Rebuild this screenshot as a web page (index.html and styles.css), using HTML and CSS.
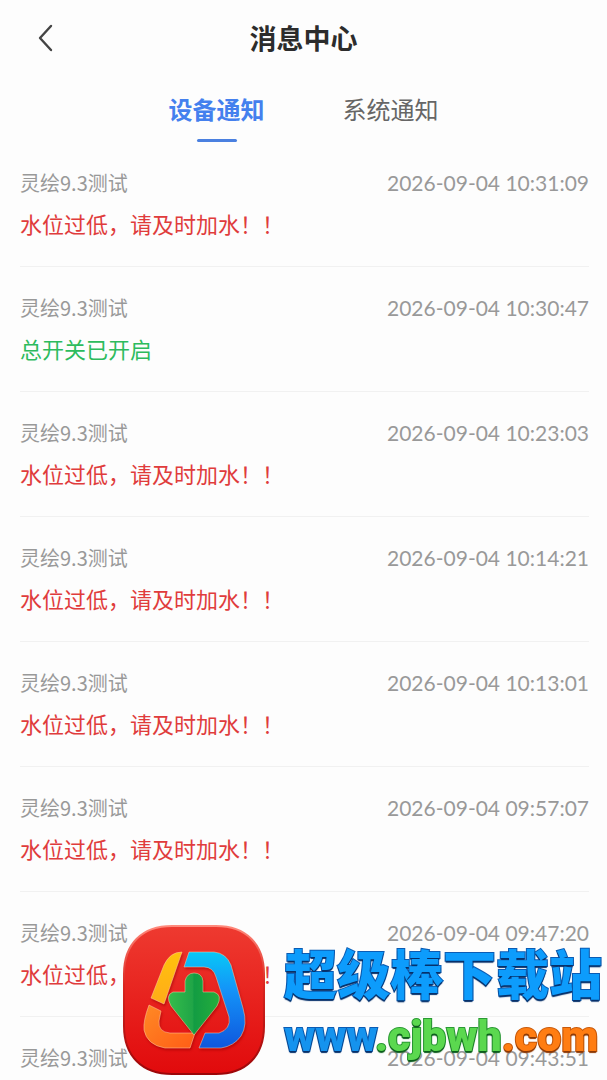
FILE: index.html
```html
<!doctype html>
<html lang="zh-CN">
<head>
<meta charset="utf-8">
<meta name="viewport" content="width=device-width, initial-scale=1">
<title>消息中心</title>
<link rel="stylesheet" href="styles.css">
</head>
<body>

<header class="topbar">
  <button class="back" type="button" aria-label="返回">
    <svg width="16" height="28" viewBox="0 0 16 28"><path d="M14 2 L3 14 L14 26"/></svg>
  </button>
  <h1>消息中心</h1>
</header>

<nav class="tabs">
  <button class="tab active" type="button">设备通知</button>
  <button class="tab" type="button">系统通知</button>
</nav>

<ul class="messages">
  <li>
    <div class="meta"><span>灵绘9.3测试</span><time>2026-09-04 10:31:09</time></div>
    <p class="warn">水位过低，请及时加水！！</p>
  </li>
  <li>
    <div class="meta"><span>灵绘9.3测试</span><time>2026-09-04 10:30:47</time></div>
    <p class="ok">总开关已开启</p>
  </li>
  <li>
    <div class="meta"><span>灵绘9.3测试</span><time>2026-09-04 10:23:03</time></div>
    <p class="warn">水位过低，请及时加水！！</p>
  </li>
  <li>
    <div class="meta"><span>灵绘9.3测试</span><time>2026-09-04 10:14:21</time></div>
    <p class="warn">水位过低，请及时加水！！</p>
  </li>
  <li>
    <div class="meta"><span>灵绘9.3测试</span><time>2026-09-04 10:13:01</time></div>
    <p class="warn">水位过低，请及时加水！！</p>
  </li>
  <li>
    <div class="meta"><span>灵绘9.3测试</span><time>2026-09-04 09:57:07</time></div>
    <p class="warn">水位过低，请及时加水！！</p>
  </li>
  <li>
    <div class="meta"><span>灵绘9.3测试</span><time>2026-09-04 09:47:20</time></div>
    <p class="warn">水位过低，请及时加水！！</p>
  </li>
  <li>
    <div class="meta"><span>灵绘9.3测试</span><time>2026-09-04 09:43:51</time></div>
  </li>
</ul>

<!-- site badge, floats over the list -->
<aside class="badge">
  <svg class="badge-logo" width="144" height="152" viewBox="0 0 144 152">
    <defs>
      <linearGradient id="red" x1="0" y1="0" x2="0" y2="1"><stop offset="0" stop-color="#ee3a30"/><stop offset="1" stop-color="#e10a0c"/></linearGradient>
      <linearGradient id="edge" x1="0" y1="0" x2="0" y2="1"><stop offset="0" stop-color="#ff8a7c"/><stop offset=".4" stop-color="#d92620"/><stop offset="1" stop-color="#9c0608"/></linearGradient>
      <linearGradient id="blue" x1="0" y1="0" x2="0" y2="1"><stop offset="0" stop-color="#08c8f6"/><stop offset=".4" stop-color="#1493f8"/><stop offset="1" stop-color="#0f57dd"/></linearGradient>
      <linearGradient id="yellow" x1="0" y1="0" x2="0" y2="1"><stop offset="0" stop-color="#ffc20c"/><stop offset="1" stop-color="#ffab19"/></linearGradient>
      <linearGradient id="orange" x1="0" y1="0" x2="1" y2="1"><stop offset="0" stop-color="#ff8a25"/><stop offset="1" stop-color="#ff5d16"/></linearGradient>
      <linearGradient id="green" x1="0" y1="0" x2="1" y2="0"><stop offset="0" stop-color="#35bd4b"/><stop offset=".48" stop-color="#20a547"/><stop offset=".5" stop-color="#129c43"/><stop offset="1" stop-color="#25ad3c"/></linearGradient>
    </defs>
    <path d="M50 2 H94 C124 2 142 20 142 50 V102 C142 132 124 150 94 150 H50 C20 150 2 132 2 102 V50 C2 20 20 2 50 2 Z" fill="url(#red)" stroke="url(#edge)" stroke-width="2"/>
    <g class="badge-parts">
      <path d="M60 28 L42 80 L29 74 L42 41 Q48 28 60 28 Z" fill="url(#yellow)"/>
      <path d="M27 81 L39 87 L37 97 Q36 108 48 109 H73 L68 124 H43 Q25 121 22 106 Q21 97 27 81 Z" fill="url(#orange)"/>
      <path d="M67 28 H92 Q104 29 109 41 L121 84 Q126 101 119 112 Q112 122 99 124 H77 L83 109 H97 Q109 105 107 93 L94 53 Q91 43 82 43 H62 Z" fill="url(#blue)"/>
      <path d="M72 111 L49 82 Q43 71 51 68 H63 V57 Q65 49 72 49 Q80 49 81 57 V68 H92 Q101 71 95 82 Z" fill="url(#green)"/>
    </g>
  </svg>
  <div class="badge-text">
    <strong>超级棒下载站</strong>
    <span class="url"><span class="www">www</span><span class="domain">.cjbwh</span><span class="com">.com</span></span>
  </div>
</aside>

</body>
</html>
```
FILE: styles.css
```css
* { box-sizing: border-box; }

body {
  margin: 0; height: 100vh; display: flex; flex-direction: column; overflow: hidden;
  background: #fdfdfd; color: #999;
  font-family: "Noto Sans CJK SC", sans-serif;
}

button { padding: 0; border: 0; background: none; font-family: inherit; cursor: pointer; }
h1, p, ul { margin: 0; padding: 0; }

.topbar {
  display: grid; grid-template-columns: 40px 1fr 40px; align-items: center; flex: none;
  height: 76px; padding: 0 20px;
}
.topbar h1 { font-size: 27px; line-height: 40px; text-align: center; color: #2c2c2c; }
.back { display: flex; justify-content: flex-end; padding-right: 7px; }
.back path { fill: none; stroke: #444; stroke-width: 2.4; stroke-linecap: round; stroke-linejoin: round; }

.tabs { display: flex; justify-content: center; gap: 78px; flex: none; }
.tab { position: relative; height: 66px; font-size: 24px; line-height: 32px; color: #666; }
.tab.active { font-weight: bold; color: #4480ee; }
.tab.active::after {
  content: ""; position: absolute; left: 50%; bottom: 0; width: 40px; height: 3px;
  margin-left: -20px; border-radius: 2px; background: #4a80e0;
}

.messages { flex: 1; min-height: 0; padding: 0 18px 0 20px; list-style: none; overflow-y: auto; scrollbar-width: none; }
.messages li { min-height: 125px; padding: 26px 0 28px; border-bottom: 1px solid #f1f1f1; }
.meta { display: flex; justify-content: space-between; font-size: 20px; line-height: 30px; }
.meta time { font-family: Lato, sans-serif; font-size: 21px; }
.messages p { margin-top: 10px; font-size: 22px; line-height: 30px; }
.warn { color: #e03c3c; }
.ok { color: #2dbb5d; }

.badge { position: fixed; right: 5px; bottom: 4px; display: flex; align-items: flex-start; gap: 18px; }
.badge-logo { flex: none; }
.badge-parts path { stroke: #ffd2a8; stroke-opacity: 0.5; stroke-width: 1; }
.badge-parts { filter: drop-shadow(1px 2px 1px #9008); }
.badge-text { display: flex; flex-direction: column; padding-top: 18px; white-space: nowrap; }
.badge-text strong {
  font-size: 53px; line-height: 60px; font-weight: 900; color: #0d9cfc;
  -webkit-text-stroke: 2px #0b5cb4; paint-order: stroke fill; text-shadow: 0 2px 1px #06306a;
}
.url {
  font-family: Roboto, sans-serif; font-size: 43px; line-height: 68px; font-weight: 900;
  paint-order: stroke fill;
}
.www { color: #1593ee; -webkit-text-stroke: 2px #0b5cb4; text-shadow: 0 2px 1px #06306a; }
.domain { color: #5bd84f; -webkit-text-stroke: 2px #2a9a34; text-shadow: 0 2px 1px #0c5c1c; }
.com { color: #ff7d12; -webkit-text-stroke: 2px #c85a0c; text-shadow: 0 2px 1px #8c3804; }
```
